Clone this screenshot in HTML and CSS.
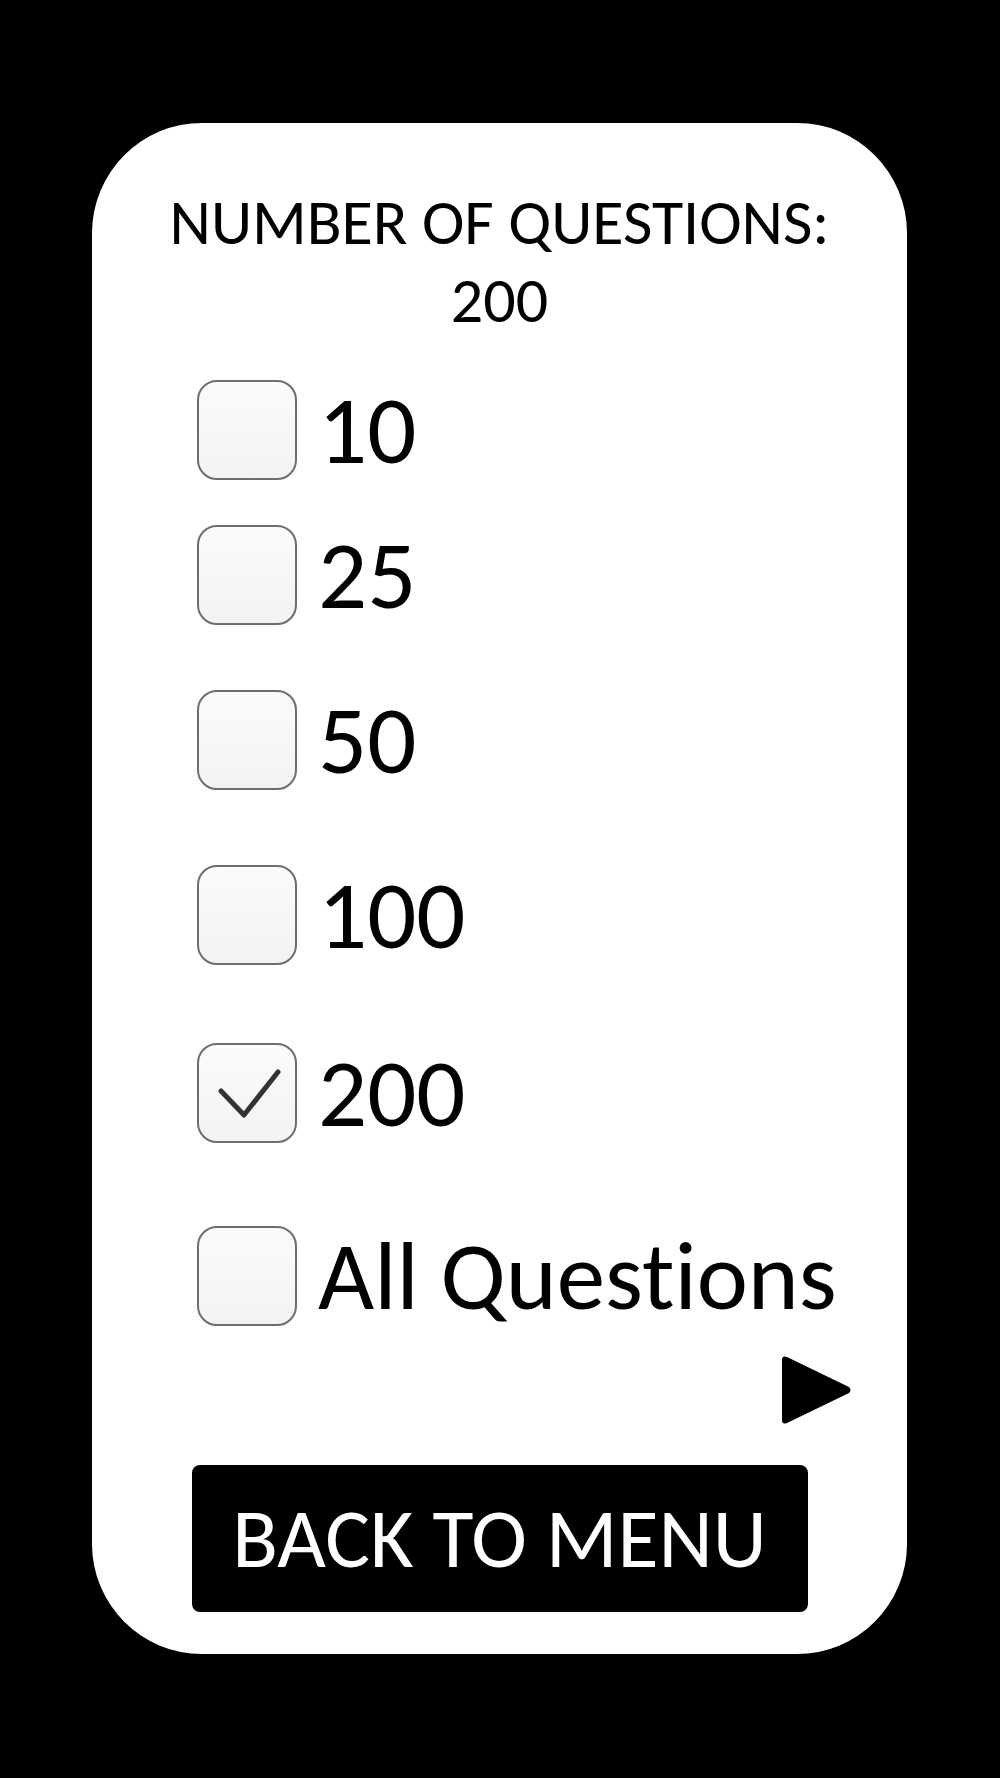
FILE: index.html
```html
<!DOCTYPE html>
<html>
<head>
<meta charset="utf-8">
<link rel="stylesheet" href="styles.css">
</head>
<body>
<div class="card">
  <div class="title">NUMBER OF QUESTIONS:<br>200</div>
  <div class="options">
    <div class="opt opt-1"><span class="box"></span><span class="label">10</span></div>
    <div class="opt opt-2"><span class="box"></span><span class="label">25</span></div>
    <div class="opt opt-3"><span class="box"></span><span class="label">50</span></div>
    <div class="opt opt-4"><span class="box"></span><span class="label">100</span></div>
    <div class="opt opt-5"><span class="box checked"><svg class="tick" viewBox="0 0 100 100" width="100" height="100"><polyline points="24,48 47,72 81,29" fill="none" stroke="#333" stroke-width="5" stroke-linecap="round" stroke-linejoin="round"/></svg></span><span class="label">200</span></div>
    <div class="opt opt-6"><span class="box"></span><span class="label">All Questions</span></div>
  </div>
  <div class="next-row">
    <svg class="play" viewBox="0 0 72 70" width="72" height="70"><path d="M2 5 Q2 0 7 2 L69 32 Q72 35 69 38 L7 68 Q2 70 2 65 Z" fill="#000"/></svg>
  </div>
  <div class="btn">BACK TO MENU</div>
</div>
</body>
</html>
```
FILE: styles.css
```css
html, body {
  margin: 0;
  padding: 0;
  background: #000;
}
body {
  height: 1778px;
  font-family: Carlito, "Open Sans", sans-serif;
  font-variant-ligatures: none;
  color: #000;
  padding-top: 123px;
  box-sizing: border-box;
}
.card {
  width: 815px;
  height: 1531px;
  margin-left: 92px;
  background: #fff;
  border-radius: 110px;
  box-sizing: border-box;
  padding: 60px 0 0 0;
  display: flex;
  flex-direction: column;
}
.title {
  text-align: center;
  font-size: 64px;
  line-height: 78px;
}
.options {
  display: flex;
  flex-direction: column;
  padding-left: 105px;
  margin-top: 41px;
}
.opt {
  display: flex;
  align-items: center;
  height: 100px;
}
.opt-2 { margin-top: 45px; }
.opt-3 { margin-top: 65px; }
.opt-4 { margin-top: 75px; }
.opt-5 { margin-top: 78px; }
.opt-6 { margin-top: 83px; }
.box {
  width: 100px;
  height: 100px;
  box-sizing: border-box;
  border: 2px solid #6e6e6e;
  border-radius: 20px;
  background: linear-gradient(#fbfbfb, #f3f3f3);
  flex: none;
  position: relative;
}
.tick {
  position: absolute;
  left: -2px;
  top: -2px;
}
.label {
  font-size: 97px;
  line-height: 100px;
  margin-left: 21px;
}
.next-row {
  display: flex;
  justify-content: flex-end;
  padding-right: 55px;
  margin-top: 29px;
}
.play { display: block; }
.btn {
  align-self: center;
  margin-top: 40px;
  width: 616px;
  height: 147px;
  background: #000;
  color: #fff;
  border-radius: 8px;
  display: flex;
  align-items: center;
  justify-content: center;
  font-size: 84px;
}
```
